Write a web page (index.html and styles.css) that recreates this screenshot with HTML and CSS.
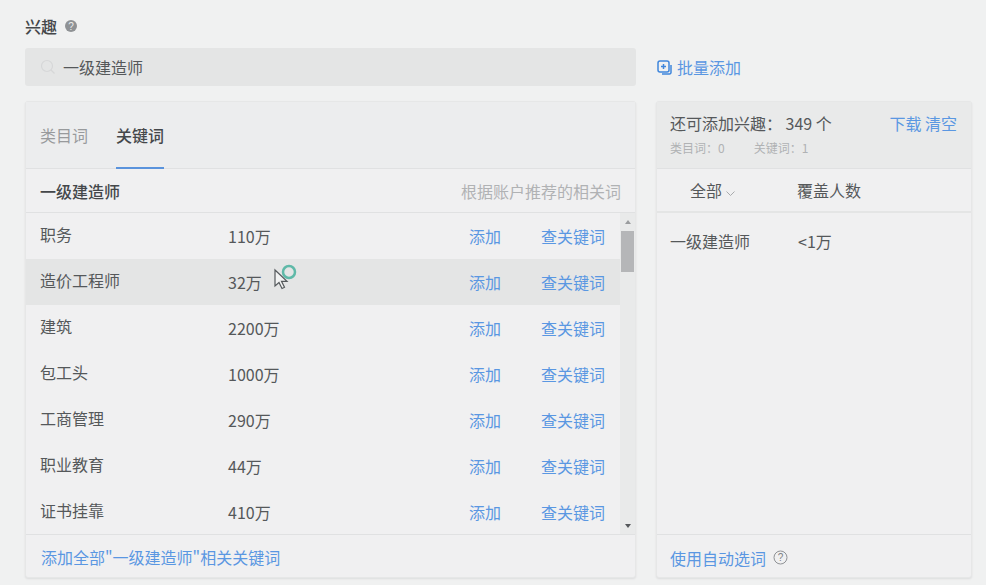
FILE: index.html
```html
<!DOCTYPE html>
<html lang="zh-CN">
<head>
    <meta charset="UTF-8">
    <title>兴趣</title>
    <link rel="stylesheet" href="styles.css">
</head>
<body>
    <div class="title-row">
        <span class="title">兴趣</span>
        <svg class="help-dot" width="14" height="14" viewBox="0 0 14 14">
            <circle cx="7" cy="7" r="6" fill="#8f9295"/>
            <text x="7" y="10.5" text-anchor="middle" font-size="10" fill="#eee" font-family="Liberation Sans">?</text>
        </svg>
    </div>

    <div class="search-row">
        <div class="search-box">
            <svg class="search-icon" width="16" height="16" viewBox="0 0 16 16" fill="none" stroke="#d6d7d8" stroke-width="1.2">
                <circle cx="7" cy="7" r="5.5"/>
                <path d="M11 11l3.5 3.5"/>
            </svg>
            <span>一级建造师</span>
        </div>
        <a class="link batch">
            <svg width="15" height="15" viewBox="0 0 15 15" fill="none" stroke="#3f86dc" stroke-width="1.5">
                <rect x="1" y="1" width="11" height="11" rx="2"/>
                <path d="M6.500 4v5M4 6.500h5M14 5v7.500a1.500 1.500 0 0 1-1.500 1.500H5"/>
            </svg>
            批量添加
        </a>
    </div>

    <div class="panels">
        <div class="panel panel-left">
            <div class="tabs">
                <span class="tab">类目词</span>
                <span class="tab active">关键词</span>
            </div>
            <div class="list-head">
                <strong>一级建造师</strong>
                <span class="hint">根据账户推荐的相关词</span>
            </div>
            <div class="list-wrap">
                <div class="list">
                    <div class="row"><span class="name">职务</span><span class="num">110万</span><a class="link add">添加</a><a class="link">查关键词</a></div>
                    <div class="row hover"><span class="name">造价工程师</span><span class="num">32万</span><a class="link add">添加</a><a class="link">查关键词</a>
                        <svg class="cursor" width="26" height="28" viewBox="0 0 26 28">
                            <circle cx="17" cy="8" r="6" fill="none" stroke="#5fb9a8" stroke-width="2.500"/>
                            <path d="M3 6v16l4-3.500 3 6 2.500-1.200-3-6h5.500z" fill="#f2f3f3" stroke="#55595c" stroke-width="1.200"/>
                        </svg>
                    </div>
                    <div class="row"><span class="name">建筑</span><span class="num">2200万</span><a class="link add">添加</a><a class="link">查关键词</a></div>
                    <div class="row"><span class="name">包工头</span><span class="num">1000万</span><a class="link add">添加</a><a class="link">查关键词</a></div>
                    <div class="row"><span class="name">工商管理</span><span class="num">290万</span><a class="link add">添加</a><a class="link">查关键词</a></div>
                    <div class="row"><span class="name">职业教育</span><span class="num">44万</span><a class="link add">添加</a><a class="link">查关键词</a></div>
                    <div class="row"><span class="name">证书挂靠</span><span class="num">410万</span><a class="link add">添加</a><a class="link">查关键词</a></div>
                </div>
                <div class="scrollbar">
                    <span class="arrow-up"></span>
                    <span class="thumb"></span>
                    <span class="arrow-down"></span>
                </div>
            </div>
            <div class="panel-foot"><a class="link">添加全部"一级建造师"相关关键词</a></div>
        </div>

        <div class="panel panel-right">
            <div class="side-head">
                <div class="side-info">
                    <div class="side-count">还可添加兴趣： 349 个</div>
                    <div class="side-sub"><span>类目词：0</span><span>关键词：1</span></div>
                </div>
                <div class="side-actions"><a class="link">下载</a> <a class="link">清空</a></div>
            </div>
            <div class="col-head">
                <span class="col-all">全部
                    <svg width="9" height="6" viewBox="0 0 9 6" fill="none" stroke="#a9abad"><path d="M.5.500l4 4 4-4"/></svg>
                </span>
                <span>覆盖人数</span>
            </div>
            <div class="side-body">
                <div class="side-row"><span class="side-name">一级建造师</span><span>&lt;1万</span></div>
            </div>
            <div class="panel-foot side-foot">
                <a class="link">使用自动选词</a>
                <svg width="15" height="15" viewBox="0 0 15 15">
                    <circle cx="7.500" cy="7.500" r="6.500" fill="none" stroke="#8f9295"/>
                    <text x="7.500" y="11" text-anchor="middle" font-size="10" fill="#7d8083" font-family="Liberation Sans">?</text>
                </svg>
            </div>
        </div>
    </div>
</body>
</html>
```

FILE: styles.css
```css
body {
    font-family: "Noto Sans CJK SC", "Liberation Sans", sans-serif;
    font-size: 16px;
    margin: 0;
    padding: 17px 14px 0 25px;
    background-color: #f0f1f1;
    color: #55585a;
    height: 585px;
    box-sizing: border-box;
    overflow: hidden;
}
.link {
    color: #5a97e2;
    text-decoration: none;
}
.title-row {
    display: flex;
    align-items: center;
    gap: 7px;
    height: 18px;
}
.title {
    font-weight: 500;
    color: #44474a;
}
.search-row {
    display: flex;
    align-items: center;
    margin-top: 13px;
    gap: 21px;
}
.search-box {
    width: 611px;
    height: 38px;
    background-color: #e4e5e5;
    border-radius: 3px;
    display: flex;
    align-items: center;
    padding-left: 15px;
    box-sizing: border-box;
    gap: 7px;
}
.batch {
    display: flex;
    align-items: center;
    gap: 5px;
}
.panels {
    display: flex;
    gap: 20px;
    margin-top: 15px;
}
.panel {
    background-color: #f0f0f1;
    border: 1px solid #e6e7e7;
    border-radius: 3px;
    box-shadow: 0 1px 2px #dcddde;
    height: 477px;
    box-sizing: border-box;
    display: flex;
    flex-direction: column;
}
.panel-left {
    width: 611px;
}
.panel-right {
    width: 316px;
}
.tabs {
    display: flex;
    gap: 28px;
    height: 67px;
    padding-left: 14px;
    background-color: #ecedee;
    border-bottom: 1px solid #e0e1e2;
    box-sizing: border-box;
    flex-shrink: 0;
}
.tab {
    line-height: 66px;
    color: #989a9c;
    width: 48px;
}
.tab.active {
    color: #44474a;
    font-weight: 500;
    height: 67px;
    border-bottom: 2px solid #5a93dc;
    box-sizing: border-box;
}
.list-head {
    display: flex;
    justify-content: space-between;
    align-items: center;
    height: 44px;
    padding: 0 14px;
    border-bottom: 1px solid #e0e1e2;
    box-sizing: border-box;
    flex-shrink: 0;
}
.list-head strong {
    font-weight: 500;
    color: #44474a;
}
.hint {
    color: #b0b2b4;
}
.list-wrap {
    display: flex;
    height: 321px;
    border-bottom: 1px solid #e0e1e2;
    flex-shrink: 0;
}
.list {
    flex: 1;
}
.row {
    display: flex;
    align-items: center;
    position: relative;
    height: 46px;
    padding-left: 14px;
}
.row.hover {
    background-color: #e4e5e5;
}
.name {
    width: 188px;
    margin-top: -4px;
}
.num {
    width: 241px;
}
.add {
    width: 72px;
}
.cursor {
    position: absolute;
    left: 246px;
    top: 5px;
}
.scrollbar {
    width: 15px;
    background-color: #e9eaea;
    display: flex;
    flex-direction: column;
    align-items: center;
    position: relative;
}
.thumb {
    width: 13px;
    height: 41px;
    background-color: #b5b6b8;
    margin-top: 18px;
}
.arrow-up, .arrow-down {
    position: absolute;
    width: 0;
    height: 0;
    border-left: 3px solid transparent;
    border-right: 3px solid transparent;
}
.arrow-up {
    top: 7px;
    border-bottom: 4px solid #9a9c9e;
}
.arrow-down {
    bottom: 6px;
    border-top: 4px solid #55585b;
}
.panel-foot {
    flex: 1;
    display: flex;
    align-items: center;
    padding: 1px 0 0 15px;
    gap: 7px;
}
.side-head {
    display: flex;
    justify-content: space-between;
    height: 67px;
    padding: 10px 14px 0 13px;
    background-color: #e9eaea;
    border-bottom: 1px solid #e0e1e2;
    box-sizing: border-box;
    flex-shrink: 0;
}
.side-count {
    line-height: 22px;
}
.side-sub {
    display: flex;
    gap: 29px;
    font-size: 12px;
    color: #b0b2b4;
    line-height: 16px;
    margin-top: 6px;
}
.side-actions {
    line-height: 22px;
}
.col-head {
    display: flex;
    align-items: center;
    height: 44px;
    border-bottom: 2px solid #e4e5e5;
    box-sizing: border-box;
    flex-shrink: 0;
}
.col-all {
    padding-left: 33px;
    width: 107px;
}
.side-body {
    flex: 1;
    padding-top: 5px;
    border-bottom: 1px solid #e0e1e2;
}
.side-row {
    display: flex;
    align-items: center;
    height: 46px;
    padding-left: 13px;
}
.side-name {
    width: 128px;
}
.side-foot {
    flex: 0 0 42px;
    padding: 3px 0 0 13px;
    box-sizing: border-box;
}
```
